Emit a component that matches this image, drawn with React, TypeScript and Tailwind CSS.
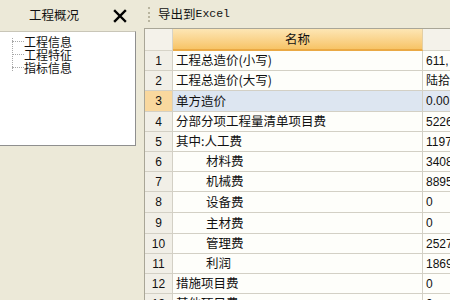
import React from "react";

const CJK = { fontFamily: '"Noto Sans CJK SC", "Liberation Sans", sans-serif' };
const NUM = { fontFamily: '"Liberation Sans", "Noto Sans CJK SC", sans-serif' };

type Row = { n: string; name: string; val: string; indent?: boolean; h: string; sel?: boolean };

const rows: Row[] = [
  { n: "1", name: "工程总造价(小写)", val: "611,", h: "h-[20px]" },
  { n: "2", name: "工程总造价(大写)", val: "陆拾", h: "h-[20px]" },
  { n: "3", name: "单方造价", val: "0.00", h: "h-[21px]", sel: true },
  { n: "4", name: "分部分项工程量清单项目费", val: "5226", h: "h-[20px]" },
  { n: "5", name: "其中:人工费", val: "1197", h: "h-[20px]" },
  { n: "6", name: "材料费", val: "3408", indent: true, h: "h-[20px]" },
  { n: "7", name: "机械费", val: "8895", indent: true, h: "h-[20px]" },
  { n: "8", name: "设备费", val: "0", indent: true, h: "h-[21px]" },
  { n: "9", name: "主材费", val: "0", indent: true, h: "h-[21px]" },
  { n: "10", name: "管理费", val: "2527", indent: true, h: "h-[20px]" },
  { n: "11", name: "利润", val: "1869", indent: true, h: "h-[20px]" },
  { n: "12", name: "措施项目费", val: "0", h: "h-[20px]" },
  { n: "13", name: "其他项目费", val: "0", h: "h-[20px]" },
];

export default function App() {
  return (
    <div className="w-[450px] h-[300px] bg-[#ece9d8] flex overflow-hidden text-[#111]">
      {/* Left panel */}
      <div className="w-[136px] shrink-0 flex flex-col">
        <div className="h-[31px] flex items-center relative">
          <span className="ml-[29px] text-[12.5px] leading-none" style={CJK}>工程概况</span>
          <svg className="ml-auto mr-[9px]" width="14" height="14" viewBox="0 0 14 14">
            <path d="M2 2 L12 12 M12 2 L2 12" stroke="#000" strokeWidth="2.4" strokeLinecap="square" />
          </svg>
        </div>
        <div className="h-[115px] bg-white border-t border-t-[#c9c6b8] border-r border-b border-r-[#8f8f8f] border-b-[#8f8f8f] relative">
          <div className="absolute left-[12px] top-[6px] h-[33px] border-l border-dotted border-[#a8a8a8]" />
          <div className="flex flex-col pt-[3px]">
            {["工程信息", "工程特征", "指标信息"].map((t) => (
              <div key={t} className="h-[13px] flex items-center">
                <div className="w-[12px] ml-[12px] border-t border-dotted border-[#a8a8a8]" />
                <span className="text-[12px] leading-none" style={CJK}>{t}</span>
              </div>
            ))}
          </div>
        </div>
      </div>

      {/* splitter */}
      <div className="w-[8px] shrink-0" />

      {/* Right panel */}
      <div className="flex-1 flex flex-col min-w-0">
        <div className="h-[28px] shrink-0 flex items-center">
          <div className="ml-[4px] h-[15px] border-l-2 border-dotted border-[#b9b59f]" />
          <span className="ml-[8px] text-[12.5px] leading-none" style={CJK}>导出到</span>
          <span className="text-[11.5px] leading-none" style={{ fontFamily: '"Liberation Mono", monospace' }}>Excel</span>
        </div>
        <div className="flex-1 border-t border-l border-[#a9a697] bg-[#f3f1e9] overflow-hidden">
          {/* header */}
          <div className="h-[22px] flex">
            <div className="w-[28px] shrink-0 bg-[#f4f2ea] border-r border-b border-[#d7d4c8]" />
            <div className="w-[250px] shrink-0 flex items-center justify-center bg-gradient-to-b from-[#fde6b4] to-[#f7c466] border-r border-[#e3cfa5] border-b-2 border-b-[#eaa944]">
              <span className="text-[12.5px] leading-none" style={CJK}>名称</span>
            </div>
            <div className="flex-1 bg-[#f4f2ea] border-b border-[#d7d4c8]" />
          </div>
          {rows.map((r) => (
            <div key={r.n} className={`${r.h} flex`}>
              <div
                className={`w-[28px] shrink-0 flex items-center justify-center border-r border-b border-[#d3d0c5] text-[12px] leading-none ${
                  r.sel ? "bg-[#f9d89e]" : "bg-[#f1efe7]"
                }`}
                style={NUM}
              >
                {r.n}
              </div>
              <div
                className={`w-[250px] shrink-0 flex items-center border-r border-b border-[#d3d0c5] ${
                  r.sel ? "bg-[#dde6f1]" : "bg-[#fefefa]"
                } ${r.indent ? "pl-[33px]" : "pl-[3px]"}`}
              >
                <span className="text-[12.5px] leading-none whitespace-nowrap" style={CJK}>{r.name}</span>
              </div>
              <div
                className={`flex-1 flex items-center pl-[3px] border-b border-[#d3d0c5] overflow-hidden ${
                  r.sel ? "bg-[#e1e8f2]" : "bg-[#fefefa]"
                }`}
              >
                <span className="text-[12px] leading-none whitespace-nowrap" style={NUM}>{r.val}</span>
              </div>
            </div>
          ))}
        </div>
      </div>
    </div>
  );
}
